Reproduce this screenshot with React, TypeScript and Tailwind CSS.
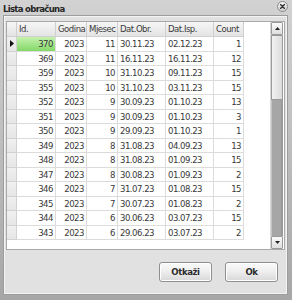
import React from "react";

const rows: [string, string, string, string, string, string][] = [
  ["370", "2023", "11", "30.11.23", "02.12.23", "1"],
  ["369", "2023", "11", "16.11.23", "16.11.23", "12"],
  ["359", "2023", "10", "31.10.23", "09.11.23", "15"],
  ["355", "2023", "10", "31.10.23", "03.11.23", "15"],
  ["352", "2023", "9", "30.09.23", "01.10.23", "13"],
  ["351", "2023", "9", "30.09.23", "01.10.23", "3"],
  ["350", "2023", "9", "29.09.23", "01.10.23", "1"],
  ["349", "2023", "8", "31.08.23", "04.09.23", "13"],
  ["348", "2023", "8", "31.08.23", "01.09.23", "15"],
  ["347", "2023", "8", "30.08.23", "01.09.23", "2"],
  ["346", "2023", "7", "31.07.23", "01.08.23", "15"],
  ["345", "2023", "7", "30.07.23", "01.08.23", "2"],
  ["344", "2023", "6", "30.06.23", "03.07.23", "15"],
  ["343", "2023", "6", "29.06.23", "03.07.23", "2"],
];

const cols = "grid grid-cols-[10px_39px_31px_31px_48px_48px_30px]";

export default function App() {
  return (
    <div className="w-[292px] h-[300px] bg-gradient-to-b from-[#d2d2d2] via-[#bdbdbd] to-[#a6a6a6] flex flex-col pl-[4px] pr-[5px] pb-[6px] font-['DejaVu_Sans_Condensed','DejaVu_Sans',sans-serif] text-[#383838]">
      {/* title bar */}
      <div className="h-[16px] flex items-center justify-between shrink-0">
        <span className="font-bold text-[9.5px] tracking-[-0.7px] text-[#262626] leading-none -ml-[1px] mt-[1px]">Lista obračuna</span>
        <div className="w-[11px] h-[11px] rounded-full border border-[#8c8c8c] bg-gradient-to-b from-[#f4f4f4] to-[#cfcfcf] flex items-center justify-center -mr-[1px] mt-[-3px]">
          <svg width="5" height="5" viewBox="0 0 5 5">
            <path d="M0.5 0.5 L4.5 4.5 M4.5 0.5 L0.5 4.5" stroke="#333" strokeWidth="1.4" strokeLinecap="round" />
          </svg>
        </div>
      </div>
      {/* panel */}
      <div className="flex-1 flex flex-col bg-[#e1e1e1] border border-[#f3f3f3] shadow-[0_0_0_1px_#9c9c9c] pt-[4px] px-[1px]">
        {/* grid */}
        <div className="h-[229px] border border-[#a9a9a9] bg-white flex shrink-0">
          <div className="flex-1 flex flex-col text-[9.5px] tracking-[-0.5px]">
            {/* header */}
            <div className={`${cols} h-[15px] text-[#3a3a3a]`}>
              <div className="bg-gradient-to-b from-[#f6f6f6] to-[#e4e4e4] border-r border-b border-[#cfcfcf]" />
              {["Id.", "Godina", "Mjesec", "Dat.Obr.", "Dat.Isp.", "Count"].map((h) => (
                <div key={h} className="bg-gradient-to-b from-[#f6f6f6] to-[#e4e4e4] border-r border-b border-[#cfcfcf] pl-[2px] flex items-center leading-none whitespace-nowrap overflow-hidden">
                  {h}
                </div>
              ))}
            </div>
            {rows.map((r, i) => (
              <div key={r[0]} className={`${cols} h-[14.5px] leading-none`}>
                <div className="bg-gradient-to-b from-[#f0f0f0] to-[#e6e6e6] border-r border-b border-[#d2d2d2] flex items-center justify-center">
                  {i === 0 && (
                    <svg width="4" height="7" viewBox="0 0 4 7">
                      <path d="M0 0 L4 3.5 L0 7 Z" fill="#111" />
                    </svg>
                  )}
                </div>
                <div className={`border-r border-b border-[#dcdcdc] flex items-center justify-end pr-[2px] ${i === 0 ? "bg-gradient-to-b from-[#c4f2ae] to-[#84d868]" : ""}`}>{r[0]}</div>
                <div className="border-r border-b border-[#dcdcdc] flex items-center justify-end pr-[2px]">{r[1]}</div>
                <div className="border-r border-b border-[#dcdcdc] flex items-center justify-end pr-[2px]">{r[2]}</div>
                <div className="border-r border-b border-[#dcdcdc] flex items-center pl-[2px]">{r[3]}</div>
                <div className="border-r border-b border-[#dcdcdc] flex items-center pl-[2px]">{r[4]}</div>
                <div className="border-r border-b border-[#dcdcdc] flex items-center justify-end pr-[2px]">{r[5]}</div>
              </div>
            ))}
          </div>
          {/* scrollbar */}
          <div className="w-[13px] flex flex-col border-l border-[#d8d8d8] mr-[1px]">
            <div className="h-[13px] border border-[#9a9a9a] rounded-[1px] bg-gradient-to-b from-[#fafafa] to-[#dedede] flex items-center justify-center">
              <svg width="5" height="3" viewBox="0 0 5 3">
                <path d="M0 3 L2.5 0 L5 3 Z" fill="#222" />
              </svg>
            </div>
            <div className="h-[65px] border border-[#9a9a9a] bg-gradient-to-r from-[#f2f2f2] to-[#dcdcdc]" />
            <div className="flex-1 bg-[#a6a6a6] border-l border-[#c4c4c4] border-r-2 border-r-[#9a9a9a]" />
            <div className="h-[13px] border border-[#9a9a9a] rounded-[1px] bg-gradient-to-b from-[#fafafa] to-[#dedede] flex items-center justify-center">
              <svg width="5" height="3" viewBox="0 0 5 3">
                <path d="M0 0 L2.5 3 L5 0 Z" fill="#222" />
              </svg>
            </div>
          </div>
        </div>
        {/* buttons */}
        <div className="flex justify-end gap-[13px] pt-[12px] pr-[7px]">
          <button className="w-[53px] h-[20px] rounded-[3px] border border-[#8f8f8f] bg-gradient-to-b from-[#fbfbfb] via-[#ededed] to-[#d8d8d8] text-[9.5px] tracking-[-0.4px] text-[#2c2c2c] font-bold leading-none shadow-[inset_0_0_0_1px_#ffffff]">
            Otkaži
          </button>
          <button className="w-[53px] h-[20px] rounded-[3px] border border-[#8f8f8f] bg-gradient-to-b from-[#fbfbfb] via-[#ededed] to-[#d8d8d8] text-[9.5px] tracking-[-0.4px] text-[#2c2c2c] font-bold leading-none shadow-[inset_0_0_0_1px_#ffffff]">
            Ok
          </button>
        </div>
      </div>
    </div>
  );
}
